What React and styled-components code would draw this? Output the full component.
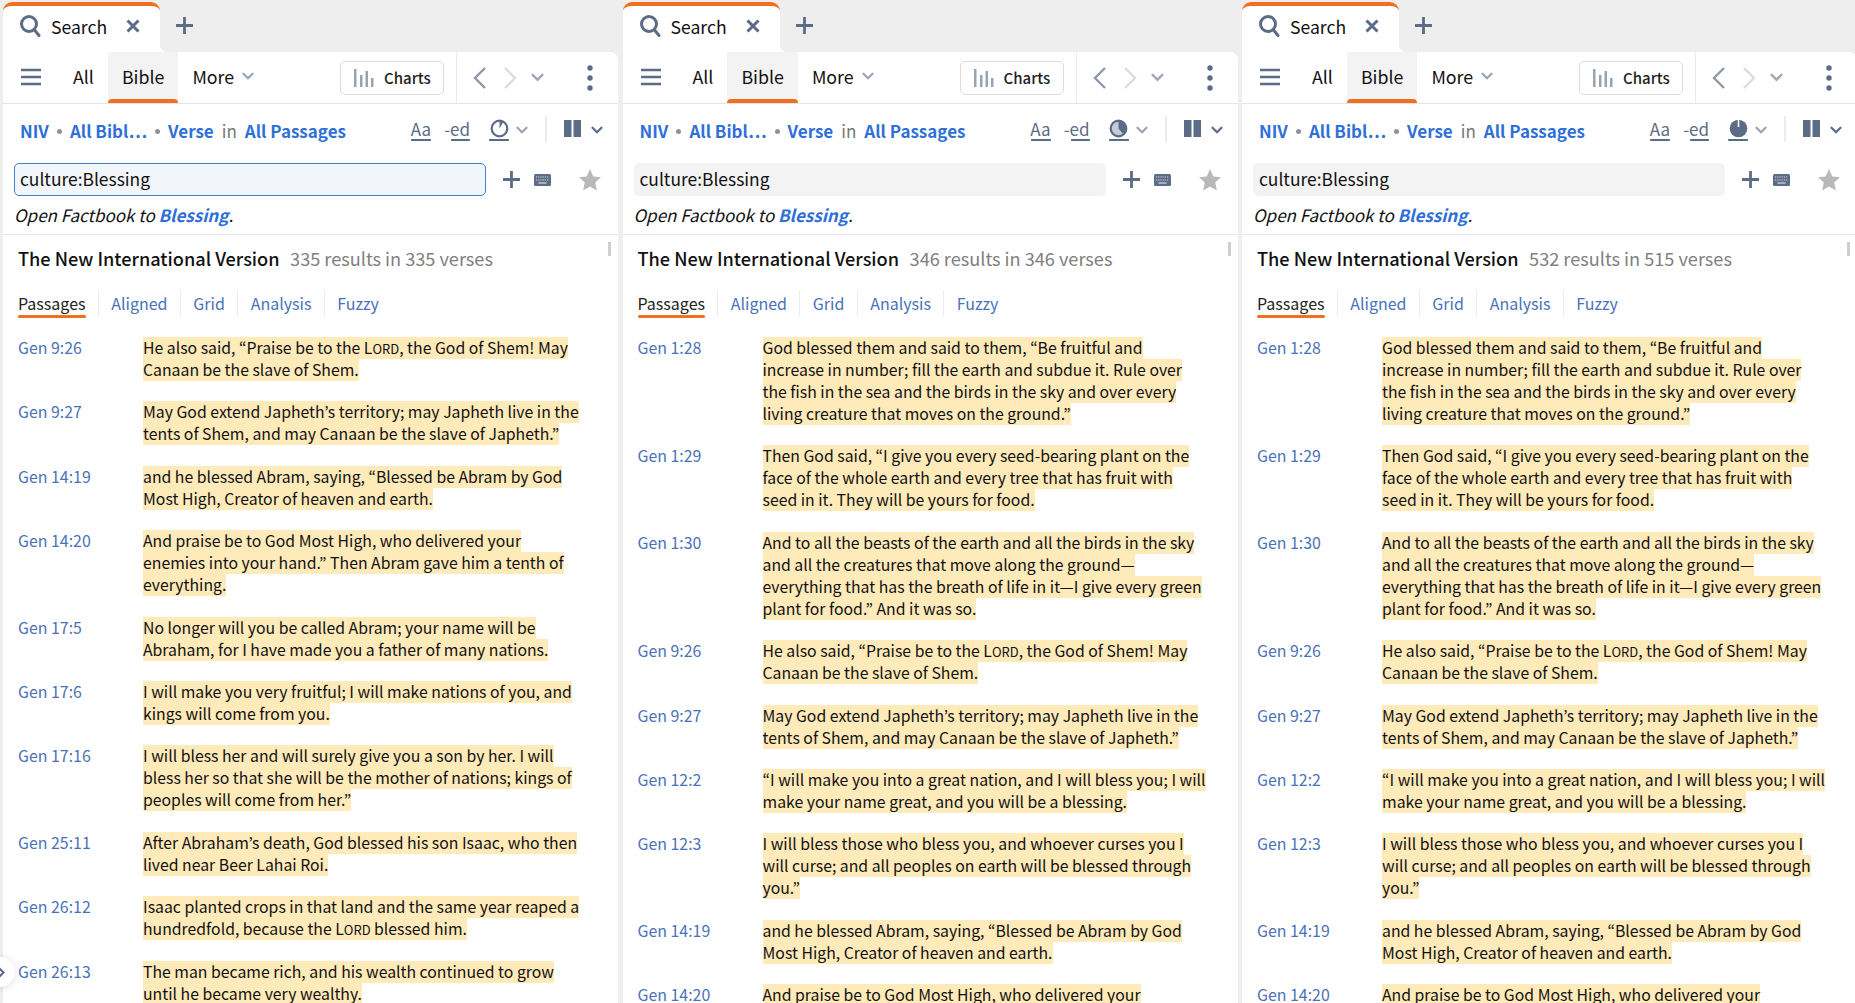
import React from "react";
import styled, { createGlobalStyle } from "styled-components";

const FONT = `"Noto Sans CJK JP", "Noto Sans", sans-serif`;
const SLATE = "#5c6b86";
const ORANGE = "#f26f1f";

const Global = createGlobalStyle`
  html, body { margin: 0; padding: 0; height: 100%; overflow: hidden; background: #eeeeee; }
  body { font-family: ${FONT}; font-feature-settings: "pwid" 1; color: #111; }
  #root { height: 100%; }
`;

const Page = styled.div`
  position: relative;
  display: grid;
  grid-template-columns: 615px 615px 615px;
  column-gap: 4.5px;
  padding-left: 3px;
  height: 1003px;
  overflow: hidden;
`;
const Panel = styled.section`
  display: flex;
  flex-direction: column;
  min-width: 0;
  height: 1003px;
  overflow: hidden;
`;
const TabStrip = styled.div`
  display: flex;
  align-items: center;
  height: 52px;
  flex: none;
`;
const Tab = styled.div`
  position: relative;
  box-sizing: border-box;
  display: flex;
  align-items: center;
  width: 157px;
  height: 50px;
  margin-top: 2px;
  padding: 0 0 6px 16px;
  background: #fff;
  border-top: 4px solid ${ORANGE};
  border-radius: 9px 9px 0 0;
  font-size: 17.6px;
  &::after {
    content: "";
    position: absolute;
    right: -8px;
    bottom: 0;
    width: 8px;
    height: 8px;
    background: radial-gradient(circle at 100% 0, transparent 8px, #fff 8.5px);
  }
`;
const TabLabel = styled.span`
  margin-left: 10px;
  width: 75px;
`;
const AddTab = styled.span`
  display: flex;
  margin: -1px 0 0 16px;
`;
const Nav = styled.nav`
  display: flex;
  align-items: stretch;
  flex: none;
  box-sizing: border-box;
  height: 52px;
  padding-left: 18px;
  background: #fff;
  border-bottom: 1px solid #e4e4e4;
  border-radius: 0 8px 0 0;
`;
const Menu = styled.span`
  display: flex;
  align-items: center;
  margin: -2px 18px 0 0;
`;
const NavItem = styled.span`
  position: relative;
  display: flex;
  align-items: center;
  gap: 8px;
  padding: 0 14px 3px;
  font-size: 17.8px;
  background: ${(p) => (p.$active ? "#f3f3f3" : "transparent")};
  ${(p) =>
    p.$active &&
    `&::after {
      content: "";
      position: absolute;
      left: 0; right: 0; bottom: 0;
      height: 4px;
      background: ${ORANGE};
      border-radius: 5px 5px 0 0;
    }`}
`;
const ChartsCell = styled.span`
  display: flex;
  align-items: center;
  margin-left: auto;
  padding-right: 12px;
`;
const ChartsButton = styled.span`
  box-sizing: border-box;
  display: flex;
  align-items: center;
  gap: 10px;
  width: 104px;
  height: 34px;
  padding-left: 13px;
  border: 1.5px solid #dcdcdc;
  border-radius: 5px;
  font-size: 15px;
  font-weight: 500;
  line-height: 28px;
  color: #222;
`;
const NavTools = styled.span`
  box-sizing: border-box;
  display: flex;
  align-items: center;
  width: 162px;
  padding: 0 24px 0 13px;
  border-left: 1.5px solid #ebebeb;
`;
const NavTool = styled.span`
  display: flex;
  margin-left: ${(p) => p.$gap || 0}px;
  margin-top: ${(p) => p.$top || 0}px;
`;
const FilterRow = styled.div`
  display: flex;
  align-items: center;
  flex: none;
  box-sizing: border-box;
  height: 59px;
  padding: 0 0 7px 17px;
  background: #fff;
  font-size: 17px;
  font-weight: 700;
`;
const Link = styled.span`
  color: #2f6fd8;
  font-weight: 600;
`;
const Dot = styled.span`
  width: 5px;
  height: 5px;
  margin: 3px 8px 0;
  border-radius: 50%;
  background: #8a93a3;
`;
const InWord = styled.span`
  margin: 0 8px;
  font-weight: 400;
  color: #777;
`;
const ViewTools = styled.div`
  display: flex;
  align-items: center;
  margin-left: auto;
  height: 100%;
  width: 207px;
  box-sizing: border-box;
`;
const Under = styled.span`
  display: flex;
  justify-content: ${(p) => (p.$end ? "flex-end" : "center")};
  align-items: flex-start;
  flex: none;
  width: ${(p) => p.$w}px;
  height: 24px;
  margin: -4px ${(p) => p.$mr}px 0 ${(p) => p.$ml || 0}px;
  border-bottom: 2.5px solid ${SLATE};
  border-radius: 0 0 1px 1px;
  font-size: 17px;
  font-weight: 400;
  line-height: 27px;
  white-space: nowrap;
  color: ${SLATE};
`;
const GaugeWrap = styled.span`
  display: flex;
  margin-top: 4px;
`;
const VDivider = styled.span`
  width: 2px;
  height: 26px;
  margin: -2px 17px 0 ${(p) => p.$ml}px;
  background: #ececec;
`;
const SearchRow = styled.div`
  display: flex;
  align-items: center;
  flex: none;
  height: 33px;
  padding-left: 11px;
  background: #fff;
`;
const SearchBox = styled.div`
  flex: 1;
  box-sizing: border-box;
  display: flex;
  align-items: center;
  height: 33px;
  padding: 0 0 3px ${(p) => (p.$focus ? 5 : 6)}px;
  background: ${(p) => (p.$focus ? "#f2f5f9" : "#f3f3f3")};
  border: ${(p) => (p.$focus ? "1.5px solid #3f7fd6" : "none")};
  border-radius: 5px;
  font-size: 17.4px;
  color: #111;
`;
const SearchTools = styled.span`
  display: flex;
  align-items: center;
  flex: none;
  width: 132px;
  box-sizing: border-box;
  padding-left: 17px;
`;
const Message = styled.div`
  flex: none;
  box-sizing: border-box;
  height: 39px;
  padding: 0 0 0 11px;
  background: #fff;
  border-bottom: 1px solid #e6e6e6;
  font-size: 17px;
  line-height: 37px;
  font-style: italic;
  color: #111;
`;
const FactLink = styled.span`
  color: #2f6fd8;
  font-weight: 700;
`;
const Results = styled.div`
  position: relative;
  flex: 1;
  min-height: 0;
  padding: 0 0 0 15px;
  background: #fff;
  overflow: hidden;
`;
const Scroll = styled.span`
  position: absolute;
  right: 7px;
  top: 7px;
  width: 3px;
  height: 14px;
  background: #cfcfcf;
`;
const TitleRow = styled.h2`
  display: flex;
  align-items: center;
  gap: 10.5px;
  height: 24px;
  margin: 11px 0 0;
  font-size: 18.15px;
  font-weight: 500;
  color: #111;
`;
const Count = styled.span`
  font-weight: 400;
  color: #808080;
`;
const SubTabs = styled.div`
  display: flex;
  align-items: stretch;
  height: 26px;
  margin-top: 20px;
  font-size: 16px;
`;
const SubTab = styled.span`
  position: relative;
  display: flex;
  align-items: center;
  height: 26px;
  padding-right: 12.4px;
  margin-right: 12.4px;
  color: ${(p) => (p.$active ? "#222" : "#4a72b8")};
  border-right: ${(p) => (p.$last ? "none" : "1px solid #ececec")};
  ${(p) =>
    p.$active &&
    `&::after {
      content: "";
      position: absolute;
      left: 0; right: 12.4px; bottom: -2px;
      height: 3px;
      background: ${ORANGE};
      border-radius: 2px;
    }`}
`;
const Verses = styled.div`
  display: flex;
  flex-direction: column;
  gap: 20.4px;
  margin-top: 21px;
`;
const Verse = styled.article`
  display: grid;
  grid-template-columns: 125px 1fr;
  font-size: 15.8px;
  line-height: 22px;
`;
const Ref = styled.span`
  color: #4a72b8;
  font-size: 15.9px;
`;
const Hl = styled.span`
  display: block;
  width: fit-content;
  height: 22px;
  background: #ffeaba;
  color: #111;
  white-space: nowrap;
`;
const LordSmall = styled.span`
  font-size: 0.82em;
`;
const Expander = styled.span`
  position: absolute;
  left: -15px;
  top: 957px;
  display: flex;
  align-items: center;
  justify-content: flex-end;
  width: 30px;
  height: 30px;
  padding-right: 10px;
  box-sizing: border-box;
  border-radius: 50%;
  background: #fff;
  box-shadow: 0 1px 8px rgba(0, 0, 0, 0.12);
`;

const SearchIcon = () => (
  <svg width="22" height="24" viewBox="0 0 22 24" fill="none" stroke={SLATE} strokeWidth="3" strokeLinecap="round">
    <circle cx="10" cy="10" r="7.5" />
    <path d="M15.5 16 L20 21.5" />
  </svg>
);
const CloseIcon = () => (
  <svg width="14" height="14" viewBox="0 0 14 14" stroke={SLATE} strokeWidth="3">
    <path d="M1.5 1.5 L12.5 12.5 M12.5 1.5 L1.5 12.5" />
  </svg>
);
const PlusIcon = ({ size = 17 }) => (
  <svg width={size} height={size} viewBox="0 0 17 17" stroke={SLATE} strokeWidth="2.8">
    <path d="M8.5 0 V17 M0 8.5 H17" />
  </svg>
);
const MenuIcon = () => (
  <svg width="20" height="18" viewBox="0 0 20 18" stroke={SLATE} strokeWidth="2.6">
    <path d="M0 2 H20 M0 9 H20 M0 16 H20" />
  </svg>
);
const Chevron = ({ size = 12, color = "#9aa3b2", sw = 2.2 }) => (
  <svg width={size} height={size * 0.7} viewBox="0 0 12 8" fill="none" stroke={color} strokeWidth={sw} strokeLinecap="round">
    <path d="M1.5 1.5 L6 6 L10.5 1.5" />
  </svg>
);
const BarsIcon = () => (
  <svg width="20" height="18" viewBox="0 0 20 18" fill="#9aa3b0">
    <rect x="0" y="0" width="2.5" height="18" />
    <rect x="6" y="6" width="2.5" height="12" />
    <rect x="11.5" y="2" width="2.5" height="16" />
    <rect x="17" y="9" width="2.5" height="9" />
  </svg>
);
const BackIcon = ({ flip, color }) => (
  <svg width="20" height="24" viewBox="0 0 20 24" fill="none" stroke={color} strokeWidth="2.4">
    <path d={flip ? "M5 2 L15 12 L5 22" : "M15 2 L5 12 L15 22"} />
  </svg>
);
const Kebab = () => (
  <svg width="10" height="26" viewBox="0 0 10 26" fill={SLATE}>
    <circle cx="5" cy="3" r="2.7" />
    <circle cx="5" cy="13" r="2.7" />
    <circle cx="5" cy="23" r="2.7" />
  </svg>
);
const Gauge = ({ mode }) => (
  <svg width="19" height="19" viewBox="0 0 19 19" fill="none">
    {mode === "outline" && (
      <>
        <circle cx="9.5" cy="9.5" r="7.8" stroke={SLATE} strokeWidth="2.2" />
        <path d="M9.5 1.7 V9.5 L13.2 3 Z" fill={SLATE} />
      </>
    )}
    {mode === "half" && (
      <>
        <circle cx="9.5" cy="9.5" r="7.8" stroke={SLATE} strokeWidth="2.2" fill="#c6ccd6" />
        <path d="M9.5 1.7 A7.8 7.8 0 0 1 14.5 15.5 L9.5 9.5 Z" fill={SLATE} />
      </>
    )}
    {mode === "full" && (
      <>
        <circle cx="9.5" cy="9.5" r="8.8" fill={SLATE} />
        <path d="M9.5 0 V8" stroke="#fff" strokeWidth="1.6" />
      </>
    )}
  </svg>
);
const ColumnsIcon = () => (
  <svg width="17" height="17" viewBox="0 0 17 17" fill={SLATE}>
    <rect x="0" y="0" width="7.5" height="17" />
    <rect x="9.5" y="0" width="7.5" height="17" />
  </svg>
);
const KeyboardIcon = () => (
  <svg width="17" height="12" viewBox="0 0 17 12">
    <rect width="17" height="12" rx="1.5" fill={SLATE} />
    <path d="M2 3 H15 M2 6 H15" stroke="#d8dde6" strokeWidth="1.2" strokeDasharray="1.2 1" />
    <path d="M4.5 9 H12.5" stroke="#d8dde6" strokeWidth="1.2" />
  </svg>
);
const StarIcon = () => (
  <svg width="22" height="22" viewBox="0 0 22 22" fill="#b9b9b9">
    <path d="M11 0 L14.3 7.4 L22 8.2 L16.2 13.5 L17.9 21.5 L11 17.4 L4.1 21.5 L5.8 13.5 L0 8.2 L7.7 7.4 Z" />
  </svg>
);
const SmallChevronRight = () => (
  <svg width="7" height="11" viewBox="0 0 7 11" fill="none" stroke={SLATE} strokeWidth="2">
    <path d="M1 1 L5.5 5.5 L1 10" />
  </svg>
);

const L = () => (
  <>
    L<LordSmall>ORD</LordSmall>
  </>
);

const V = {
  g128: ["Gen 1:28", ["God blessed them and said to them, “Be fruitful and", "increase in number; fill the earth and subdue it. Rule over", "the fish in the sea and the birds in the sky and over every", "living creature that moves on the ground.”"]],
  g129: ["Gen 1:29", ["Then God said, “I give you every seed-bearing plant on the", "face of the whole earth and every tree that has fruit with", "seed in it. They will be yours for food."]],
  g130: ["Gen 1:30", ["And to all the beasts of the earth and all the birds in the sky", "and all the creatures that move along the ground—", "everything that has the breath of life in it—I give every green", "plant for food.” And it was so."]],
  g926: ["Gen 9:26", [<>He also said, “Praise be to the <L />, the God of Shem! May</>, "Canaan be the slave of Shem."]],
  g927: ["Gen 9:27", ["May God extend Japheth’s territory; may Japheth live in the", "tents of Shem, and may Canaan be the slave of Japheth.”"]],
  g122: ["Gen 12:2", ["“I will make you into a great nation, and I will bless you; I will", "make your name great, and you will be a blessing."]],
  g123: ["Gen 12:3", ["I will bless those who bless you, and whoever curses you I", "will curse; and all peoples on earth will be blessed through", "you.”"]],
  g1419: ["Gen 14:19", ["and he blessed Abram, saying, “Blessed be Abram by God", "Most High, Creator of heaven and earth."]],
  g1420: ["Gen 14:20", ["And praise be to God Most High, who delivered your", "enemies into your hand.” Then Abram gave him a tenth of", "everything."]],
  g175: ["Gen 17:5", ["No longer will you be called Abram; your name will be", "Abraham, for I have made you a father of many nations."]],
  g176: ["Gen 17:6", ["I will make you very fruitful; I will make nations of you, and", "kings will come from you."]],
  g1716: ["Gen 17:16", ["I will bless her and will surely give you a son by her. I will", "bless her so that she will be the mother of nations; kings of", "peoples will come from her.”"]],
  g2511: ["Gen 25:11", ["After Abraham’s death, God blessed his son Isaac, who then", "lived near Beer Lahai Roi."]],
  g2612: ["Gen 26:12", ["Isaac planted crops in that land and the same year reaped a", <>hundredfold, because the <L /> blessed him.</>]],
  g2613: ["Gen 26:13", ["The man became rich, and his wealth continued to grow", "until he became very wealthy."]],
};

const list1 = [V.g926, V.g927, V.g1419, V.g1420, V.g175, V.g176, V.g1716, V.g2511, V.g2612, V.g2613];
const list2 = [V.g128, V.g129, V.g130, V.g926, V.g927, V.g122, V.g123, V.g1419, V.g1420];

const panels = [
  { focus: true, gauge: "outline", count: "335 results in 335 verses", list: list1 },
  { focus: false, gauge: "half", count: "346 results in 346 verses", list: list2 },
  { focus: false, gauge: "full", count: "532 results in 515 verses", list: list2 },
];
const subTabs = ["Passages", "Aligned", "Grid", "Analysis", "Fuzzy"];

const SearchPanel = ({ focus, gauge, count, list }) => (
  <Panel>
    <TabStrip>
      <Tab>
        <SearchIcon />
        <TabLabel>Search</TabLabel>
        <CloseIcon />
      </Tab>
      <AddTab>
        <PlusIcon />
      </AddTab>
    </TabStrip>
    <Nav>
      <Menu>
        <MenuIcon />
      </Menu>
      <NavItem>All</NavItem>
      <NavItem $active>Bible</NavItem>
      <NavItem>
        More <Chevron size={12} />
      </NavItem>
      <ChartsCell>
        <ChartsButton>
          <BarsIcon />
          Charts
        </ChartsButton>
      </ChartsCell>
      <NavTools>
        <NavTool>
          <BackIcon color="#8f98a8" />
        </NavTool>
        <NavTool $gap={10}>
          <BackIcon flip color="#d9dce2" />
        </NavTool>
        <NavTool $gap={11}>
          <Chevron size={13} color="#a2a9b6" />
        </NavTool>
        <NavTool $gap={41}>
          <Kebab />
        </NavTool>
      </NavTools>
    </Nav>
    <FilterRow>
      <Link>NIV</Link>
      <Dot />
      <Link>All Bibl…</Link>
      <Dot />
      <Link>Verse</Link>
      <InWord>in</InWord>
      <Link>All Passages</Link>
      <ViewTools>
        <Under $w={20} $mr={20}>Aa</Under>
        <Under $w={19} $mr={18} $end>-ed</Under>
        <Under $w={20} $mr={7} $ml={1}>
          <GaugeWrap>
            <Gauge mode={gauge} />
          </GaugeWrap>
        </Under>
        <Chevron size={12} />
        <VDivider $ml={17} />
        <NavTool $top={-4}>
          <ColumnsIcon />
        </NavTool>
        <NavTool $gap={10}>
          <Chevron size={12} color={SLATE} />
        </NavTool>
      </ViewTools>
    </FilterRow>
    <SearchRow>
      <SearchBox $focus={focus}>culture:Blessing</SearchBox>
      <SearchTools>
        <PlusIcon />
        <NavTool $gap={14}>
          <KeyboardIcon />
        </NavTool>
        <NavTool $gap={28}>
          <StarIcon />
        </NavTool>
      </SearchTools>
    </SearchRow>
    <Message>
      Open Factbook to <FactLink>Blessing</FactLink>.
    </Message>
    <Results>
      <Scroll />
      <TitleRow>
        The New International Version <Count>{count}</Count>
      </TitleRow>
      <SubTabs>
        {subTabs.map((t, i) => (
          <SubTab key={t} $active={i === 0} $last={i === subTabs.length - 1}>
            {t}
          </SubTab>
        ))}
      </SubTabs>
      <Verses>
        {list.map(([ref, lines]) => (
          <Verse key={ref}>
            <Ref>{ref}</Ref>
            <div>
              {lines.map((line, i) => (
                <Hl key={i}>{line}</Hl>
              ))}
            </div>
          </Verse>
        ))}
      </Verses>
    </Results>
  </Panel>
);

export default function App() {
  return (
    <Page>
      <Global />
      {panels.map((p) => (
        <SearchPanel key={p.count} {...p} />
      ))}
      <Expander>
        <SmallChevronRight />
      </Expander>
    </Page>
  );
}
